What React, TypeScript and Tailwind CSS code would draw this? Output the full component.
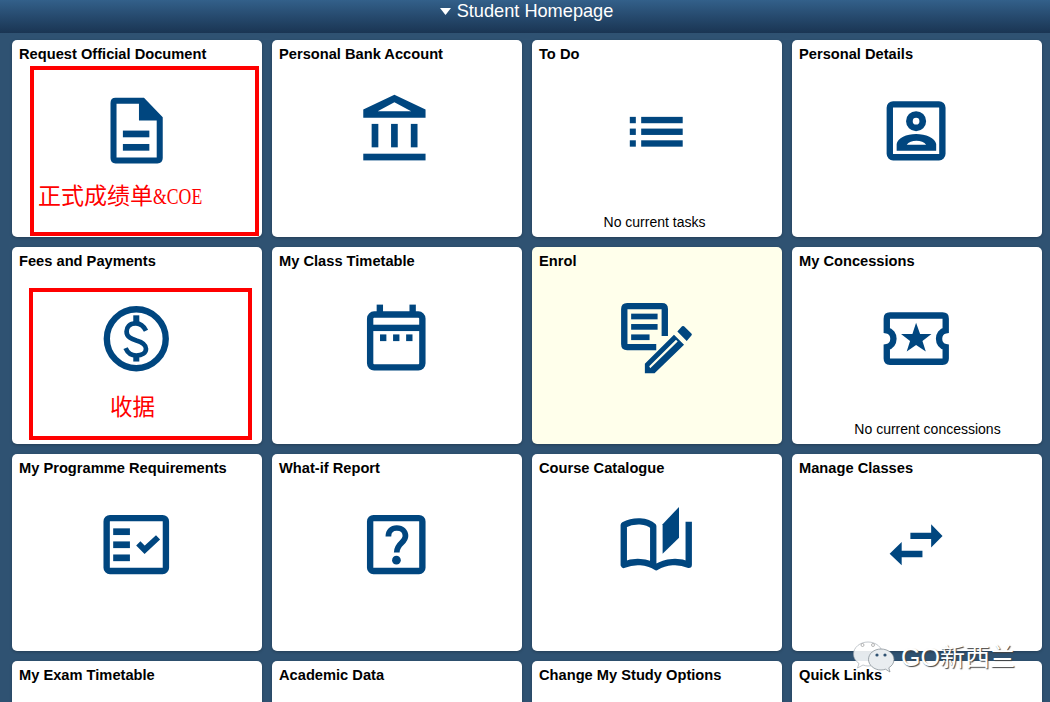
import React from "react";

const C = "#00467f";

function Ic({ x, y, children }: { x: number; y: number; children: React.ReactNode }) {
  return (
    <svg width="100" height="100" viewBox={`${x} ${y} 298.67 298.67`} fill={C} className="block">
      {children}
    </svg>
  );
}

const icons: Record<string, React.ReactNode> = {
  doc: (
    <Ic x={259.8} y={238.9}>
      <path
        fillRule="evenodd"
        d="M345 292H430L486 350V472Q486 488 470 488H345Q330 488 330 472V308Q330 292 345 292ZM348 310V470H468V360H415V310Z"
      />
      <rect x="367" y="390" width="79" height="20" />
      <rect x="367" y="430" width="79" height="20" />
    </Ic>
  ),
  bank: (
    <Ic x={1036.4} y={238.9}>
      <path
        fillRule="evenodd"
        d="M1085 327L1178 283L1271 327V352H1085ZM1128 332H1228L1178 305Z"
      />
      <rect x="1110" y="370" width="20" height="70" />
      <rect x="1168" y="370" width="20" height="70" />
      <rect x="1227" y="370" width="20" height="70" />
      <rect x="1085" y="459" width="186" height="20" />
    </Ic>
  ),
  list: (
    <Ic x={244.9} y={238.9}>
      <rect x="313" y="349" width="18" height="19" />
      <rect x="313" y="384" width="18" height="19" />
      <rect x="313" y="419" width="18" height="19" />
      <rect x="347" y="349" width="124" height="19" />
      <rect x="347" y="384" width="124" height="19" />
      <rect x="347" y="419" width="124" height="19" />
    </Ic>
  ),
  person: (
    <Ic x={1021.4} y={238.9}>
      <rect x="1089.5" y="311.5" width="157" height="158" rx="10" fill="none" stroke={C} strokeWidth="19" />
      <circle cx="1168" cy="362" r="20" fill="none" stroke={C} strokeWidth="20" />
      <path
        fillRule="evenodd"
        d="M1110 450V430C1112 412 1140 400 1168 400C1196 400 1226 412 1228 430V450ZM1140 432H1198C1188 416 1150 416 1140 432Z"
      />
    </Ic>
  ),
  dollar: (
    <Ic x={259.8} y={125.4}>
      <circle cx="407" cy="280" r="88" fill="none" stroke={C} strokeWidth="19" />
      <path
        d="M436 256C428 240 416 234 406 234C386 234 378 246 378 258C378 275 392 280 407 285C425 290 436 296 436 310C436 322 425 330 407 330C392 330 381 322 375 308"
        fill="none"
        stroke={C}
        strokeWidth="14"
      />
      <rect x="398" y="210" width="18" height="20" />
      <rect x="398" y="330" width="18" height="18" />
    </Ic>
  ),
  calendar: (
    <Ic x={1036.4} y={125.4}>
      <rect x="1105.5" y="207.5" width="156" height="158" rx="12" fill="none" stroke={C} strokeWidth="19" />
      <rect x="1125" y="178" width="19" height="25" />
      <rect x="1223" y="178" width="19" height="25" />
      <rect x="1105" y="238" width="156" height="19" />
      <rect x="1135" y="267" width="19" height="20" />
      <rect x="1174" y="267" width="19" height="20" />
      <rect x="1213" y="267" width="19" height="20" />
    </Ic>
  ),
  enrol: (
    <Ic x={244.9} y={125.4}>
      <path
        d="M417.5 272V190Q417.5 182.500 409 182.500H305Q296.500 182.500 296.500 191V296Q296.500 305 305 305H392"
        fill="none"
        stroke={C}
        strokeWidth="19"
      />
      <rect x="317" y="205" width="79" height="17" />
      <rect x="317" y="236" width="79" height="17" />
      <rect x="317" y="267" width="55" height="17" />
      <path
        fillRule="evenodd"
        d="M358 355L445 268L475 298L387 383H358ZM371 362L374 368L456 288L451 283Z"
      />
      <path d="M455 258L469 243Q472 241 475 243L497 264Q500 267 497 270L483 287Z" />
    </Ic>
  ),
  ticket: (
    <Ic x={1021.4} y={125.4}>
      <path
        d="M1090 210.500H1247Q1256.500 210.500 1256.500 220V255C1230 260 1230 300 1256.500 305V339Q1256.500 348.500 1247 348.500H1090Q1080.500 348.500 1080.500 339V305C1107 300 1107 260 1080.500 255V220Q1080.500 210.500 1090 210.500Z"
        fill="none"
        stroke={C}
        strokeWidth="19"
      />
      <path d="M1168 232L1180 266H1214L1187 287L1197 318L1168 299L1140 318L1150 287L1123 266H1157Z" />
    </Ic>
  ),
  check: (
    <Ic x={259.8} y={131.4}>
      <rect x="318.500" y="203.500" width="177" height="158" rx="10" fill="none" stroke={C} strokeWidth="19" />
      <rect x="338" y="234" width="50" height="20" />
      <rect x="338" y="273" width="50" height="20" />
      <rect x="338" y="312" width="50" height="20" />
      <path d="M413 279L432 298L472 261" fill="none" stroke={C} strokeWidth="18" />
    </Ic>
  ),
  question: (
    <Ic x={1036.4} y={131.4}>
      <rect x="1105.500" y="203.500" width="156" height="158" rx="10" fill="none" stroke={C} strokeWidth="19" />
      <path
        d="M1160 258C1160 242 1170 233 1185 233C1201 233 1211 243 1211 257C1211 278 1185 278 1185 306"
        fill="none"
        stroke={C}
        strokeWidth="17"
      />
      <circle cx="1184" cy="329" r="13" />
    </Ic>
  ),
  book: (
    <Ic x={244.9} y={131.4}>
      <path d="M411 222L460 170V262L411 310Z" />
      <path
        d="M489 214V343C460 330 420 332 392 350C365 332 325 330 295 343V224C325 208 365 210 383 228V342"
        fill="none"
        stroke={C}
        strokeWidth="19"
        strokeLinejoin="round"
      />
    </Ic>
  ),
  arrows: (
    <Ic x={1021.4} y={131.4}>
      <path d="M1151 247H1213V222L1247 257L1213 291V266H1151Z" />
      <path d="M1187 301H1125V275L1089 310L1125 344V320H1187Z" />
    </Ic>
  ),
};

type Tile = { t: string; icon?: string; bg?: string; note?: string; noteCls?: string; mark?: React.ReactNode };

const tiles: Tile[] = [
  {
    t: "Request Official Document",
    icon: "doc",
    mark: (
      <div className="absolute left-[18px] top-[26px] w-[229px] h-[170px] border-4 border-[#ff0000] pl-[4px] pt-[113px] text-[23px] leading-[28px] text-[#ff0000] whitespace-nowrap font-['Liberation_Serif','Noto_Sans_CJK_SC',serif] font-normal">
        正式成绩单<span className="inline-block origin-left scale-x-[0.77]">&amp;COE</span>
      </div>
    ),
  },
  { t: "Personal Bank Account", icon: "bank" },
  { t: "To Do", icon: "list", note: "No current tasks", noteCls: "pr-[5px]" },
  { t: "Personal Details", icon: "person" },
  {
    t: "Fees and Payments",
    icon: "dollar",
    mark: (
      <div className="absolute left-[17px] top-[41px] w-[223px] h-[152px] border-4 border-[#ff0000] pl-[77px] pt-[102px] text-[22.5px] leading-[28px] text-[#ff0000] whitespace-nowrap font-['Liberation_Serif','Noto_Sans_CJK_SC',serif] font-normal">
        收据
      </div>
    ),
  },
  { t: "My Class Timetable", icon: "calendar" },
  { t: "Enrol", icon: "enrol", bg: "bg-[#ffffeb]" },
  { t: "My Concessions", icon: "ticket", note: "No current concessions", noteCls: "pl-[21px]" },
  { t: "My Programme Requirements", icon: "check" },
  { t: "What-if Report", icon: "question" },
  { t: "Course Catalogue", icon: "book" },
  { t: "Manage Classes", icon: "arrows" },
  { t: "My Exam Timetable" },
  { t: "Academic Data" },
  { t: "Change My Study Options" },
  { t: "Quick Links" },
];

function Card({ tile }: { tile: Tile }) {
  return (
    <div
      className={`relative flex flex-col h-[197px] rounded-[5px] shadow-[0_1px_3px_rgba(0,0,0,0.25)] ${tile.bg ?? "bg-white"}`}
    >
      <div className="h-[28px] pl-[7px] pt-[5px] text-[14.67px] leading-[18px] font-bold text-black whitespace-nowrap">
        {tile.t}
      </div>
      {tile.icon && <div className="mt-[12px] flex justify-center">{icons[tile.icon]}</div>}
      {tile.note && (
        <div className={`mt-auto pb-[6px] text-center text-[14px] leading-[18px] text-black ${tile.noteCls ?? ""}`}>
          {tile.note}
        </div>
      )}
      {tile.mark}
    </div>
  );
}

export default function App() {
  return (
    <div className="relative h-[702px] w-[1050px] overflow-hidden bg-[#2f5272] font-['Liberation_Sans',Arial,sans-serif]">
      <header className="flex h-[33px] items-start justify-center bg-gradient-to-b from-[#33608a] to-[#1a3553] pt-[1px] pl-[3px] text-white">
        <div className="flex items-center gap-[6px] text-[18.2px] leading-[20px]">
          <svg width="11" height="7" viewBox="0 0 11 7" className="mt-[1px]">
            <path d="M0 0H11L5.500 7Z" fill="#fff" />
          </svg>
          <span>Student Homepage</span>
        </div>
      </header>
      <main className="grid grid-cols-[repeat(4,250px)] auto-rows-[197px] gap-[10px] pl-[12px] pt-[7px]">
        {tiles.map((tile) => (
          <Card key={tile.t} tile={tile} />
        ))}
      </main>
      <div className="absolute left-[853px] top-[641px] flex items-center gap-[6px]">
        <svg width="42" height="32" viewBox="0 0 42 32">
          <path
            d="M15 1C7 1 0.500 6.500 0.500 13C0.500 17 2.500 20 6 22.500L4.500 27L10 24C12 24.700 13.500 25 15 25C23 25 29.500 19.500 29.500 13C29.500 6.500 23 1 15 1Z"
            fill="#ffffff"
            fillOpacity="0.88"
            stroke="#9aa3ab"
            strokeWidth="0.6"
          />
          <circle cx="9.500" cy="4" r="1.500" fill="#fff" stroke="#888" strokeWidth="0.6" />
          <circle cx="20" cy="4" r="1.500" fill="#fff" stroke="#888" strokeWidth="0.6" />
          <path
            d="M28 8C21 8 15.500 12.500 15.500 18.500C15.500 24 21 29 28 29C29.500 29 31 28.700 32.500 28.200L37 31L35.800 26.800C39 24.800 41 22 41 18.500C41 12.500 35 8 28 8Z"
            fill="#e9edf0"
            stroke="#7b858d"
            strokeWidth="0.7"
          />
          <circle cx="24" cy="14" r="1.600" fill="#2f5272" />
          <circle cx="32" cy="14" r="1.600" fill="#2f5272" />
        </svg>
        <span className="text-[25px] leading-[28px] text-white whitespace-nowrap [text-shadow:1px_1px_1px_#444] font-['Liberation_Sans','Noto_Sans_CJK_SC',sans-serif]">
          GO新西兰
        </span>
      </div>
    </div>
  );
}
